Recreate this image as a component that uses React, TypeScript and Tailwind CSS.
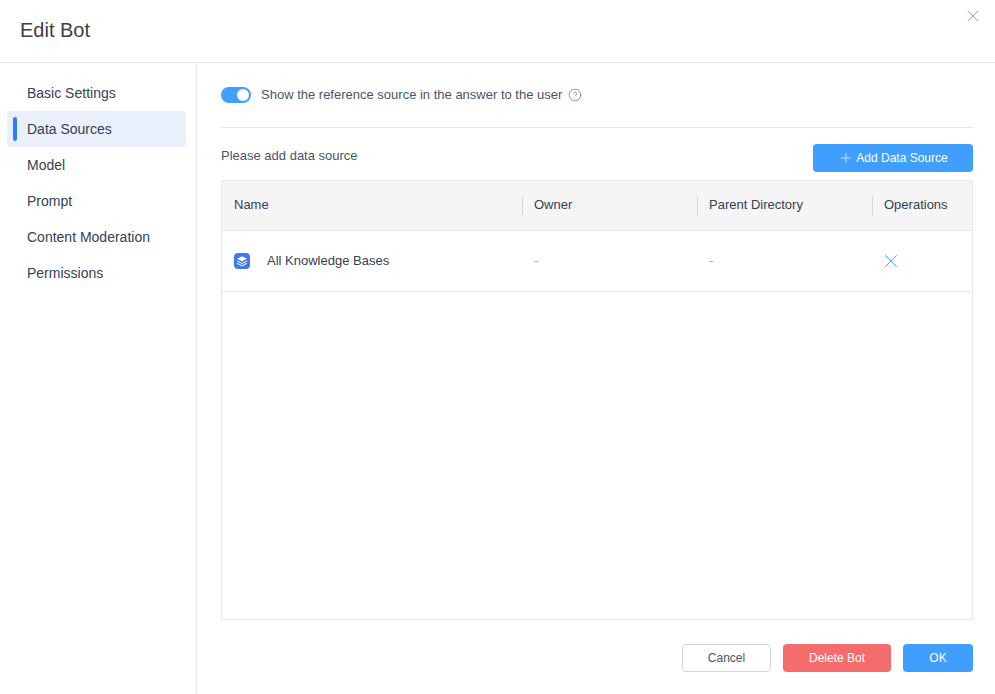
import { CircleHelp, Plus, X } from "lucide-react";

const navItems = ["Basic Settings", "Data Sources", "Model", "Prompt", "Content Moderation", "Permissions"];
const tableCols = "grid grid-cols-[300px_175px_175px_1fr]";

function KnowledgeIcon() {
  return (
    <svg viewBox="0 0 16 16" className="h-4 w-4 shrink-0">
      <rect width="16" height="16" rx="4" fill="#3f78ed" />
      <path d="M8 3.2 13 5.7 8 8.2 3 5.7Z" fill="#fff" />
      <path d="M3 8 8 10.4 13 8M3 10.2 8 12.8 13 10.2" fill="none" stroke="#fff" strokeOpacity="0.8" strokeWidth="1.1" />
    </svg>
  );
}

export default function App() {
  return (
    <div className="flex h-screen flex-col bg-white font-['Liberation_Sans',sans-serif] text-sm text-gray-700">
      <header className="flex h-[63px] shrink-0 justify-between border-b border-gray-200 pl-5 pr-3">
        <h1 className="pt-4 text-xl text-neutral-700">Edit Bot</h1>
        <button className="self-start pt-1.5 text-gray-400">
          <X className="h-5 w-5" strokeWidth={1.25} />
        </button>
      </header>

      <div className="flex min-h-0 flex-1">
        <nav className="w-[197px] shrink-0 border-r border-gray-200 py-3 pl-[7px] pr-2.5">
          {navItems.map((item) => {
            const active = item === "Data Sources";
            return (
              <div
                key={item}
                className={
                  active
                    ? "relative flex h-9 items-center rounded bg-[#eaf0fb] pl-5 text-gray-700"
                    : "flex h-9 items-center pl-5 text-gray-700"
                }
              >
                {active && <span className="absolute left-1.5 top-1.5 h-6 w-1 rounded-sm bg-blue-500" />}
                {item}
              </div>
            );
          })}
        </nav>

        <main className="flex min-w-0 flex-1 flex-col pl-6 pr-[22px]">
          <div className="flex h-[65px] shrink-0 items-center border-b border-gray-200">
            <span className="flex h-4 w-[30px] items-center justify-end rounded-full bg-[#409eff] pr-0.5">
              <span className="h-3 w-3 rounded-full bg-white" />
            </span>
            <span className="ml-2.5 text-[13px] text-gray-600">Show the reference source in the answer to the user</span>
            <CircleHelp className="ml-1.5 h-3.5 w-3.5 text-gray-500" strokeWidth={1.25} />
          </div>

          <div className="mt-4 flex items-center justify-between">
            <span className="pb-1 text-[13px] text-gray-600">Please add data source</span>
            <button className="flex h-7 w-40 items-center justify-center gap-0.5 rounded bg-[#409eff] text-xs text-white">
              <Plus className="h-4 w-4" strokeWidth={1} />
              Add Data Source
            </button>
          </div>

          <div className="mt-2 flex-1 border border-gray-200">
            <div className={`${tableCols} h-[50px] items-center border-b border-gray-200 bg-neutral-100 text-[13px]`}>
              <div className="px-3">Name</div>
              <div className="border-l border-gray-300 px-[11px]">Owner</div>
              <div className="border-l border-gray-300 px-[11px]">Parent Directory</div>
              <div className="border-l border-gray-300 pl-[11px]">Operations</div>
            </div>
            <div className={`${tableCols} h-[61px] items-center border-b border-gray-200 text-[13px]`}>
              <div className="flex items-center gap-[17px] px-3">
                <KnowledgeIcon />
                All Knowledge Bases
              </div>
              <div className="px-3 text-gray-400">-</div>
              <div className="px-3 text-gray-400">-</div>
              <div className="px-3 text-[#409eff]">
                <X className="-ml-1 h-5.5 w-5.5" strokeWidth={1} />
              </div>
            </div>
          </div>

          <div className="flex h-[74px] shrink-0 items-center justify-end gap-3 pt-0.5 text-xs">
            <button className="h-7 w-[89px] rounded border border-gray-300 text-gray-600">Cancel</button>
            <button className="h-7 w-[108px] rounded bg-[#f56c6c] text-white">Delete Bot</button>
            <button className="h-7 w-[70px] rounded bg-[#409eff] text-white">OK</button>
          </div>
        </main>
      </div>
    </div>
  );
}
